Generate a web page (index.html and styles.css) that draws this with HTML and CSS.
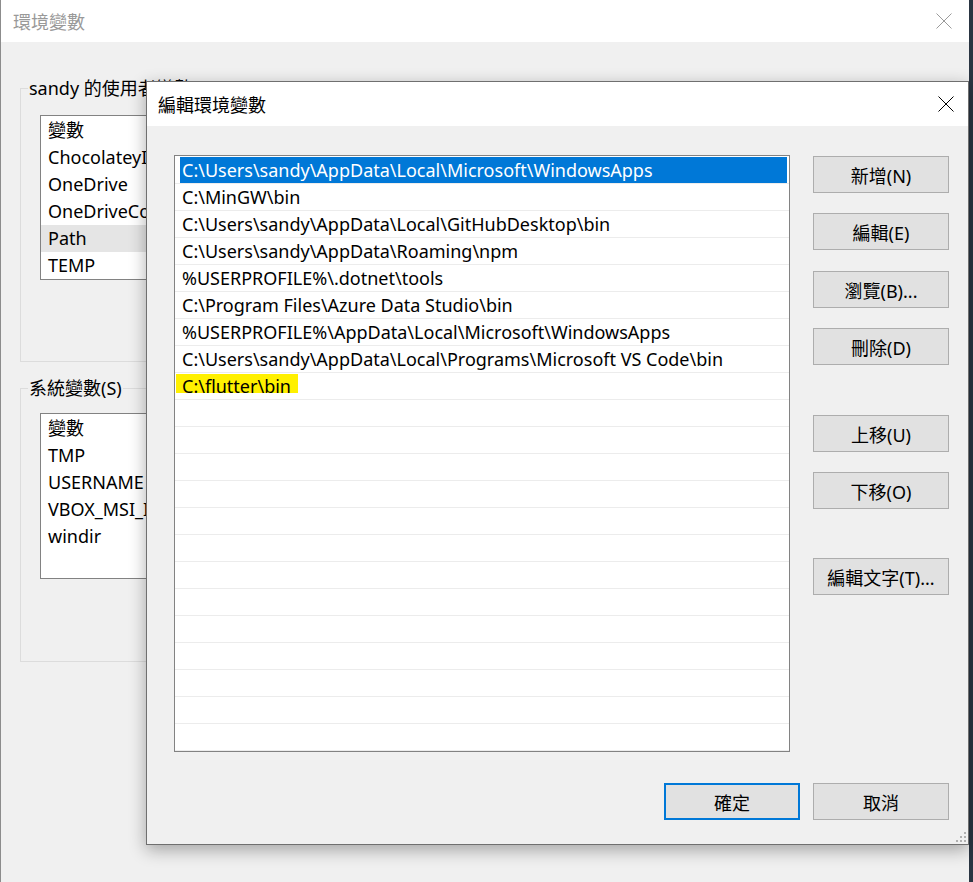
FILE: index.html
```html
<!DOCTYPE html>
<html lang="zh-Hant">
<head>
<meta charset="utf-8">
<title>環境變數</title>
<link rel="stylesheet" href="styles.css">
</head>
<body>
<div class="screen">
  <div class="win back">
    <div class="titlebar back-title">
      <span class="title-text">環境變數</span>
      <svg class="close" width="16" height="16" viewBox="0 0 16 16"><path d="M0.5 0.5L15.5 15.5M15.5 0.5L0.5 15.5" stroke="#9a9a9a" stroke-width="1" fill="none"/></svg>
    </div>
    <div class="back-body">
      <div class="group">
        <div class="group-label">sandy 的使用者變數(U)</div>
        <div class="lv lv-user">
          <div class="lv-head">變數</div>
          <div class="lv-row">ChocolateyInstall</div>
          <div class="lv-row">OneDrive</div>
          <div class="lv-row">OneDriveConsumer</div>
          <div class="lv-row sel">Path</div>
          <div class="lv-row">TEMP</div>
        </div>
      </div>
      <div class="group group-sys">
        <div class="group-label">系統變數(S)</div>
        <div class="lv lv-sys">
          <div class="lv-head">變數</div>
          <div class="lv-row">TMP</div>
          <div class="lv-row">USERNAME</div>
          <div class="lv-row">VBOX_MSI_INSTALL_PATH</div>
          <div class="lv-row">windir</div>
        </div>
      </div>
    </div>

    <div class="dialog">
      <div class="titlebar front-title">
        <span class="title-text">編輯環境變數</span>
        <svg class="close" width="16" height="16" viewBox="0 0 16 16"><path d="M0.5 0.5L15.5 15.5M15.5 0.5L0.5 15.5" stroke="#000" stroke-width="1" fill="none"/></svg>
      </div>
      <div class="dlg-body">
        <div class="dlg-main">
          <div class="pathlist">
            <div class="prow sel"><span class="ptext">C:\Users\sandy\AppData\Local\Microsoft\WindowsApps</span></div>
            <div class="prow"><span class="ptext">C:\MinGW\bin</span></div>
            <div class="prow"><span class="ptext">C:\Users\sandy\AppData\Local\GitHubDesktop\bin</span></div>
            <div class="prow"><span class="ptext">C:\Users\sandy\AppData\Roaming\npm</span></div>
            <div class="prow"><span class="ptext">%USERPROFILE%\.dotnet\tools</span></div>
            <div class="prow"><span class="ptext">C:\Program Files\Azure Data Studio\bin</span></div>
            <div class="prow"><span class="ptext">%USERPROFILE%\AppData\Local\Microsoft\WindowsApps</span></div>
            <div class="prow"><span class="ptext">C:\Users\sandy\AppData\Local\Programs\Microsoft VS Code\bin</span></div>
            <div class="prow mark"><span class="ptext">C:\flutter\bin</span></div>
            <div class="prow"></div>
            <div class="prow"></div>
            <div class="prow"></div>
            <div class="prow"></div>
            <div class="prow"></div>
            <div class="prow"></div>
            <div class="prow"></div>
            <div class="prow"></div>
            <div class="prow"></div>
            <div class="prow"></div>
            <div class="prow"></div>
            <div class="prow"></div>
            <div class="prow"></div>
          </div>
          <div class="side">
            <button class="btn">新增(N)</button>
            <button class="btn g20">編輯(E)</button>
            <button class="btn g21">瀏覽(B)...</button>
            <button class="btn g20">刪除(D)</button>
            <button class="btn g50">上移(U)</button>
            <button class="btn g20">下移(O)</button>
            <button class="btn g49">編輯文字(T)...</button>
          </div>
        </div>
        <div class="dlg-footer">
          <button class="btn primary">確定</button>
          <button class="btn">取消</button>
        </div>
      </div>
      <svg class="grip" width="11" height="11" viewBox="0 0 11 11"><g fill="#b0b0b0"><rect x="8" y="0" width="2" height="2"/><rect x="4" y="4" width="2" height="2"/><rect x="8" y="4" width="2" height="2"/><rect x="0" y="8" width="2" height="2"/><rect x="4" y="8" width="2" height="2"/><rect x="8" y="8" width="2" height="2"/></g></svg>
    </div>
  </div>
  <div class="desktop"></div>
</div>
</body>
</html>
```

FILE: styles.css
```css
html, body {
  margin: 0;
  padding: 0;
}

body {
  background: #2a3542;
}

.screen {
  display: flex;
  width: 973px;
  height: 882px;
  overflow: hidden;
  font-family: "Segoe UI", "Noto Sans", "Noto Sans CJK TC", sans-serif;
  font-size: 18px;
  color: #000;
}

.back {
  position: relative;
  flex: none;
  width: 969px;
  height: 882px;
  box-sizing: border-box;
  background: #f0f0f0;
  border-left: 1px solid #8c8c8c;
}

.desktop {
  flex: 1;
  background: #2a3542;
}

.titlebar {
  display: flex;
  align-items: center;
  justify-content: space-between;
  background: #fff;
}

.back-title {
  height: 42px;
  padding: 0 17px 0 12px;
  color: #999;
}

.close {
  display: block;
  flex: none;
}

.back-body {
  padding: 46px 0 0 19px;
}

.group {
  width: 930px;
  box-sizing: border-box;
  border: 1px solid #dcdcdc;
  padding: 0 0 81px 19px;
}

.group-sys {
  margin-top: 26px;
  padding-bottom: 82px;
}

.group-label {
  width: fit-content;
  margin: -13px 0 0 -12px;
  padding: 0 1px;
  line-height: 24px;
  background: #f0f0f0;
  white-space: nowrap;
}

.lv {
  width: 107px;
  box-sizing: border-box;
  border: 1px solid #828282;
  border-right: 0;
  background: #fff;
  margin-top: 15px;
  height: 165px;
  overflow: hidden;
}

.lv-sys {
  margin-top: 13px;
  height: 166px;
}

.lv-head {
  height: 28px;
  line-height: 28px;
  padding-left: 7px;
}

.lv-row {
  height: 27px;
  line-height: 27px;
  padding-left: 7px;
  white-space: nowrap;
}

.lv-row.sel {
  background: #e5e5e5;
}

.dialog {
  position: absolute;
  left: 145px;
  top: 81px;
  width: 823px;
  height: 764px;
  box-sizing: border-box;
  border: 1px solid #6f6f6f;
  background: #f0f0f0;
  box-shadow: 0 5px 16px rgba(0, 0, 0, 0.32);
  display: flex;
  flex-direction: column;
}

.front-title {
  height: 44px;
  flex: none;
  padding: 0 14px 0 11px;
}

.dlg-body {
  flex: 1;
  display: flex;
  flex-direction: column;
  padding: 29px 19px 24px 27px;
}

.dlg-main {
  display: flex;
  gap: 23px;
}

.pathlist {
  width: 616px;
  height: 597px;
  flex: none;
  box-sizing: border-box;
  border: 1px solid #828282;
  background: #fff;
  padding-top: 1px;
  overflow: hidden;
}

.prow {
  display: flex;
  height: 27px;
  box-sizing: border-box;
  border-bottom: 1px solid #ececec;
  line-height: 26px;
  white-space: nowrap;
}

.ptext {
  padding-left: 7px;
}

.prow.sel .ptext {
  flex: 1;
  margin: 0 2px 0 5px;
  padding-left: 2px;
  background: #0078d7;
  color: #fff;
}

.prow.mark {
  background: linear-gradient(#fff000, #fff000) 1px 1px / 122px 19px no-repeat, #fff;
}

.side {
  display: flex;
  flex-direction: column;
  width: 136px;
  padding-top: 1px;
}

.btn {
  width: 136px;
  height: 37px;
  box-sizing: border-box;
  border: 1px solid #adadad;
  background: #e1e1e1;
  font: inherit;
  color: #000;
  padding: 0;
  margin: 0;
}

.side .g20 { margin-top: 20px; }
.side .g21 { margin-top: 21px; }
.side .g50 { margin-top: 50px; }
.side .g49 { margin-top: 49px; }

.dlg-footer {
  display: flex;
  justify-content: flex-end;
  gap: 13px;
  margin-top: 31px;
}

.btn.primary {
  border: 2px solid #0078d7;
}

.grip {
  position: absolute;
  right: 1px;
  bottom: 1px;
}
```
